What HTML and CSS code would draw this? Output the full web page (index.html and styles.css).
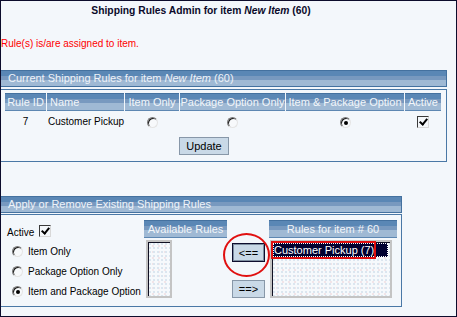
FILE: index.html
```html
<!DOCTYPE html>
<html>
<head>
  <meta charset="utf-8">
  <title>Shipping Rules Admin</title>
  <link rel="stylesheet" href="styles.css">
</head>
<body>
  <div class="page">
    <h1 class="title">Shipping Rules Admin for item <em>New Item</em> (60)</h1>
    <p class="message">Rule(s) is/are assigned to item.</p>

    <div class="bar bar-wide">Current Shipping Rules for item <em>New Item</em> (60)</div>
    <div class="box box-wide">
      <div class="rules-table">
        <div class="th">Rule ID</div>
        <div class="th th-left">Name</div>
        <div class="th">Item Only</div>
        <div class="th">Package Option Only</div>
        <div class="th">Item &amp; Package Option</div>
        <div class="th">Active</div>
        <div class="td">7</div>
        <div class="td td-left">Customer Pickup</div>
        <div class="td"><span class="radio"></span></div>
        <div class="td"><span class="radio"></span></div>
        <div class="td"><span class="radio on"></span></div>
        <div class="td"><span class="check"></span></div>
      </div>
      <div class="actions">
        <button class="btn btn-update">Update</button>
      </div>
    </div>

    <div class="bar bar-narrow">Apply or Remove Existing Shipping Rules</div>
    <div class="box box-narrow apply">
      <div class="options">
        <div class="opt-row active-row"><span class="opt-label">Active</span><span class="check"></span></div>
        <div class="opt-row"><span class="radio"></span><span class="opt-label">Item Only</span></div>
        <div class="opt-row"><span class="radio"></span><span class="opt-label">Package Option Only</span></div>
        <div class="opt-row"><span class="radio on"></span><span class="opt-label">Item and Package Option</span></div>
      </div>
      <div class="list-col list-available">
        <div class="th">Available Rules</div>
        <div class="listbox"></div>
      </div>
      <div class="move-col">
        <button class="btn btn-move focused">&lt;==<span class="ring"></span></button>
        <button class="btn btn-move">==&gt;</button>
      </div>
      <div class="list-col list-assigned">
        <div class="th">Rules for item # 60</div>
        <div class="listbox">
          <div class="option selected">Customer Pickup (7)<span class="mark"></span></div>
        </div>
      </div>
    </div>
  </div>
</body>
</html>
```

FILE: styles.css
```css
* {
  margin: 0;
  padding: 0;
  box-sizing: border-box;
}
body {
  background: #f3f7fb;
  font-family: "Liberation Sans", Arial, sans-serif;
  font-size: 10px;
  color: #000;
}
.page {
  width: 457px;
  height: 317px;
  border: 1px solid #0c0c2c;
  overflow: hidden;
}
.title {
  width: 400px;
  margin-top: 3px;
  font-size: 10.3px;
  line-height: 13px;
  font-weight: bold;
  text-align: center;
  color: #0a0a2a;
}
.message {
  margin-top: 20px;
  line-height: 13px;
  color: #ff0000;
}

/* section header bars */
.bar {
  height: 17px;
  margin-top: 20px;
  padding-left: 7px;
  border: 1px solid #44719f;
  border-left: none;
  font-size: 11px;
  line-height: 15px;
  color: #eef3f9;
  white-space: nowrap;
  background: linear-gradient(to bottom, #5a87b5 0, #5a87b5 5px, #7899bf 5px, #7899bf 9px, #9fb9d4 9px, #9fb9d4 100%);
}
.bar-wide { width: 446px; }
.bar-narrow { width: 401px; margin-top: 34px; }

.box {
  border: 1px solid #4a78a6;
  border-left: none;
}
.box-wide {
  width: 446px;
  margin-top: 2px;
  padding: 3px 0 6px 4px;
}
.box-narrow {
  width: 401px;
  height: 93px;
  margin-top: 1px;
}

/* current rules table */
.rules-table {
  display: grid;
  grid-template-columns: 41px 77px 54px 105px 118px 36px;
  grid-template-rows: 18px 20px;
  column-gap: 1px;
  row-gap: 1px;
}
.th {
  height: 18px;
  border-top: 1px solid #44719f;
  border-bottom: 1px solid #5d87b2;
  font-size: 11px;
  line-height: 16px;
  color: #f2f6fa;
  text-align: center;
  white-space: nowrap;
  background: linear-gradient(to bottom, #5a87b5 0, #5a87b5 5px, #7899bf 5px, #7899bf 9px, #9fb9d4 9px, #9fb9d4 100%);
}
.th-left {
  text-align: left;
  padding-left: 3px;
}
.td {
  display: flex;
  align-items: center;
  justify-content: center;
  line-height: 20px;
  white-space: nowrap;
}
.td-left {
  justify-content: flex-start;
  padding-left: 1px;
}
.actions {
  margin-top: 5px;
  padding-left: 174px;
}

/* form controls */
.btn {
  height: 18px;
  border: 1px solid #8797a8;
  background: #c9d9e7;
  font-family: "Liberation Sans", Arial, sans-serif;
  font-size: 11px;
  color: #000;
  line-height: 16px;
}
.btn-update {
  width: 50px;
}
.radio {
  display: inline-block;
  width: 11px;
  height: 11px;
  border: 1px solid;
  border-color: #7a7a7a #e4e4e4 #e4e4e4 #7a7a7a;
  border-radius: 50%;
  background: #f7f9fb;
  box-shadow: inset 1px 1px 0 #1e1e1e;
  position: relative;
  flex-shrink: 0;
}
.radio.on::after {
  content: '';
  position: absolute;
  top: 3px;
  left: 3px;
  width: 4px;
  height: 4px;
  border-radius: 50%;
  background: #000;
}
.check {
  display: inline-block;
  width: 12px;
  height: 12px;
  border: 1px solid;
  border-color: #3a3a3a #d8d8d8 #d8d8d8 #3a3a3a;
  background: #f4f7fa;
  position: relative;
  flex-shrink: 0;
}
.check::after {
  content: '';
  position: absolute;
  left: 3px;
  top: 0px;
  width: 3px;
  height: 6px;
  border: solid #000;
  border-width: 0 2px 2px 0;
  transform: rotate(40deg);
}

/* apply / remove */
.apply {
  display: flex;
  align-items: flex-start;
}
.options {
  width: 143px;
  padding-top: 6px;
}
.opt-row {
  display: flex;
  align-items: center;
  height: 20px;
  padding-left: 11px;
  gap: 5px;
  white-space: nowrap;
}
.opt-label {
  padding-top: 2px;
  line-height: 18px;
}
.active-row {
  padding-left: 6px;
}
.active-row .opt-label {
  padding-top: 3px;
  line-height: 17px;
}
.list-col {
  padding-top: 5px;
}
.list-col .th {
  height: 18px;
}
.list-available .th { width: 83px; }
.list-available .listbox {
  width: 26px;
  margin-left: 2px;
}
.list-assigned {
  margin-left: 4px;
}
.list-assigned .th { width: 128px; }
.list-assigned .listbox {
  width: 122px;
  margin-left: 1px;
}
.listbox {
  height: 58px;
  margin-top: 2px;
  border: 2px solid #c4c4c4;
  box-shadow: inset 1px 1px 0 #101022;
  background-color: #f6f9fc;
  background-image:
    radial-gradient(circle, #dae5ef 0.7px, transparent 0.9px),
    radial-gradient(circle, #f1e3e7 0.7px, transparent 0.9px);
  background-size: 4px 4px, 6px 6px;
  background-position: 0 0, 2px 1px;
  padding: 1px 2px 0 1px;
}
.option {
  position: relative;
  height: 14px;
  padding-left: 1px;
  font-size: 11px;
  line-height: 14px;
  color: #fff;
  white-space: nowrap;
}
.option.selected {
  background: #000030;
  outline: 1px dotted #fff;
  outline-offset: -1px;
}
.option .mark {
  position: absolute;
  top: -2px;
  left: -2px;
  width: 105px;
  height: 18px;
  border: 2px solid #e01010;
}
.move-col {
  display: flex;
  flex-direction: column;
  margin-left: 5px;
  padding-top: 28px;
}
.btn-move {
  width: 33px;
  position: relative;
}
.btn-move + .btn-move {
  margin-top: 18px;
}
.btn-move.focused {
  height: 19px;
  border-color: #0d0d2d;
  box-shadow: inset 0 0 0 1px #7d8ea0;
}
.ring {
  position: absolute;
  top: -11px;
  left: -10px;
  width: 47px;
  height: 44px;
  border: 2px solid #e01010;
  border-radius: 50%;
}
```
